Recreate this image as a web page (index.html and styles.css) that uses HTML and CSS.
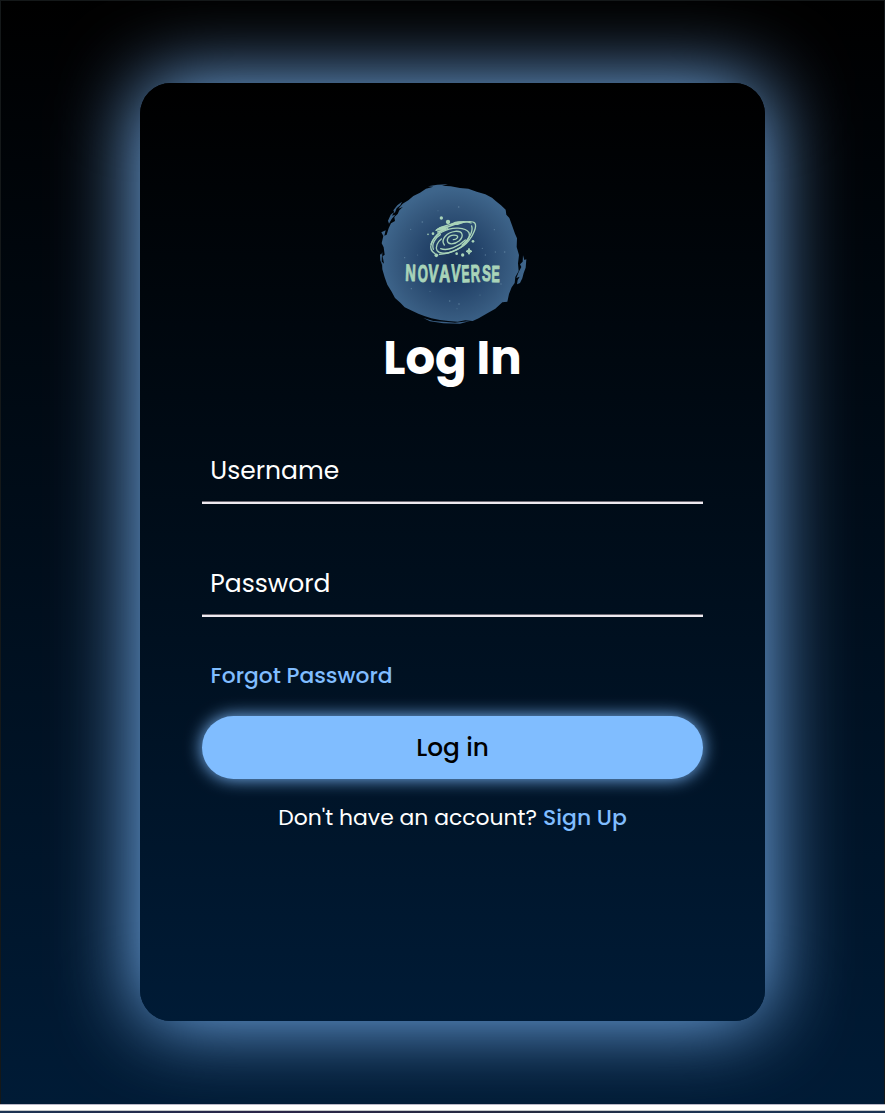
FILE: index.html
```html
<!DOCTYPE html>
<html lang="en">
<head>
<meta charset="utf-8">
<title>Novaverse - Log In</title>
<link rel="stylesheet" href="styles.css">
</head>
<body>
<main class="page">
  <form class="card">
    <svg class="logo" viewBox="0 0 510 480" role="img" aria-label="Novaverse">
      <defs>
        <radialGradient id="sky" gradientUnits="userSpaceOnUse" cx="248" cy="255" r="215">
          <stop offset="0" stop-color="#1b3558"/>
          <stop offset=".4" stop-color="#24446a"/>
          <stop offset=".75" stop-color="#34577c"/>
          <stop offset="1" stop-color="#3e658b"/>
        </radialGradient>
      </defs>
      <g fill="url(#sky)">
        <path d="M168 41L190 35 174 34 202 29 234 28 216 32 242 34 270 39 295 41 320 50 346 58 366 68 378 79 393 91 407 104 409 119 418 129 426 151 435 176 441 190 440 216 447 240 444 265 446 288 436 306 434 324 425 337 417 357 412 380 397 382 376 401 352 415 326 430 308 438 286 436 263 440 235 438 210 435 184 430 163 423 145 416 126 407 104 397 91 383 75 369 65 350 52 329 44 307 37 283 36 260 33 240 37 232 36 260 42 266 38 244 44 239 41 217 35 205 40 183 34 172 47 166 43 182 50 179 56 160 63 145 75 138 73 126 83 117 88 106 98 96 85 101 98 86 116 75 130 63 150 53Z"/>
        <path d="M54 137L62 119 72 111 66 122 76 119 65 132 57 146ZM70 106L82 91 96 80 91 91 80 100 74 115ZM30 237L34 240 36 270 31 256ZM160 429L190 438 220 440 255 443 300 438 270 446 220 445 180 439Z"/>
        <path d="M459 241L463 255 469 253 467 278 461 294 457 310 450 324 441 328 443 315 449 305 439 309 446 291 454 276 450 268 458 260Z"/>
      </g>
      <g fill="#6f92ad" opacity=".65">
        <circle cx="266" cy="96" r="2.5"/><circle cx="157" cy="141" r="2.5"/><circle cx="204" cy="107" r="1.5"/><circle cx="373" cy="164" r="2"/><circle cx="122" cy="163" r="2"/><circle cx="404" cy="231" r="2.5"/><circle cx="376" cy="231" r="2"/><circle cx="337" cy="220" r="2"/><circle cx="346" cy="240" r="2"/><circle cx="104" cy="248" r="2"/><circle cx="143" cy="240" r="1.5"/><circle cx="393" cy="327" r="2"/><circle cx="124" cy="341" r="2"/><circle cx="239" cy="378" r="2.5"/><circle cx="267" cy="387" r="2.5"/><circle cx="261" cy="401" r="1.5"/><circle cx="330" cy="360" r="1.5"/><circle cx="180" cy="349" r="1.5"/>
      </g>
      <g class="galaxy">
        <path d="M196 237C170 222 184 189 216 171C247 153 288 157 297 173C304 190 282 216 248 229C226 238 207 236 201 226C196 216 202 201 214 192"/>
        <path d="M183 208C193 178 223 157 255 148C283 140 309 137 315 145C321 155 310 180 297 196C280 218 244 237 208 238"/>
        <path d="M199 166C211 154 238 150 262 142C278 138 293 140 303 144"/>
        <path d="M305 153C310 168 299 191 276 210M190 223C184 207 196 188 211 179M203 171L233 161"/>
        <path d="M223 210C211 194 230 172 256 169C279 167 282 184 268 197C252 210 233 209 232 197C231 185 245 178 258 181C269 184 260 194 250 194"/>
        <path d="M212 221C233 229 264 216 286 195"/>
        <path d="M200 165Q212 153 230 156L218 164ZM244 148Q260 138 278 142L263 148Z" fill="#a9d4b9"/>
      </g>
      <g fill="#a9d4b9">
        <circle cx="214" cy="129" r="5"/><circle cx="234" cy="141" r="6.5"/><circle cx="189" cy="176" r="4"/><circle cx="174" cy="178" r="2.5"/><circle cx="309" cy="199" r="4"/><circle cx="199" cy="241" r="5.5"/><circle cx="260" cy="236" r="4"/><circle cx="278" cy="240" r="5"/><path d="M297 220l3 6 6 3-6 3-3 6-3-6-6-3 6-3z" stroke="#a9d4b9" stroke-width="3"/>
      </g>
      <g class="wordmark">
        <text transform="translate(105 317) rotate(2) scale(.6 .97)">N</text>
        <text transform="translate(143 321) scale(.54 .98)">O</text>
        <text transform="translate(173 320) rotate(3) scale(.62 1.03)">V</text>
        <text transform="translate(207 322) scale(.64 1)">A</text>
        <text transform="translate(242 319) rotate(2) scale(.58 1)">V</text>
        <text transform="translate(275 322) rotate(-2) scale(.5 1)">E</text>
        <text transform="translate(303 321) rotate(-2) scale(.53 1)">R</text>
        <text transform="translate(335 317) rotate(2) scale(.55 .92)">S</text>
        <text transform="translate(364 321) rotate(1) scale(.52 .96)">E</text>
      </g>
    </svg>
    <h1 class="title">Log In</h1>
    <input class="field" type="text" placeholder="Username" aria-label="Username">
    <input class="field field-password" type="password" placeholder="Password" aria-label="Password">
    <a class="forgot">Forgot Password</a>
    <button class="submit" type="button">Log in</button>
    <p class="signup"><span class="question">Don't have an account?</span><a class="signup-link">Sign Up</a></p>
  </form>
</main>
<div class="divider"></div>
<footer class="footer"></footer>
</body>
</html>
```
FILE: styles.css
```css
* { box-sizing: border-box; }

body {
  margin: 0;
  height: 1113px;
  overflow: hidden;
  display: flex;
  flex-direction: column;
  background: #fff;
  font-family: Poppins, Inter, sans-serif;
}

.page {
  flex: none;
  height: 1104px;
  padding-top: 81.5px;
  overflow: hidden;
  border: 1px solid #141819;
  border-bottom: 0;
  background: linear-gradient(#000, #001b36);
}

.card {
  width: 625px;
  height: 938px;
  margin-left: 139px;
  padding: 92.5px 62.5px 0;
  display: flex;
  flex-direction: column;
  border-radius: 31px;
  background: linear-gradient(#000, #001b36);
  box-shadow: 0 0 82px #80bdff;
}

.logo { width: 170px; height: 160px; flex: none; margin-left: 167.5px; }

.galaxy {
  fill: none;
  stroke: #a9d4b9;
  stroke-width: 4;
  stroke-linecap: round;
}

.wordmark text {
  font: bold 73px "Liberation Sans", sans-serif;
  fill: #a9d4b9;
  stroke: #a9d4b9;
  stroke-width: 3px;
  stroke-linejoin: round;
}

.title {
  margin: -13px 0 0;
  height: 72px;
  font-size: 46.6px;
  font-weight: 700;
  line-height: 72px;
  text-align: center;
  color: #fff;
}

.field {
  width: 500.5px;
  height: 68px;
  margin: 42px 0 0 -.2px;
  padding: 4px 8px 0;
  border: 0;
  border-bottom: 2px solid #eeeaf0;
  border-radius: 0;
  outline: 0;
  background: transparent;
  box-shadow: inset 0 -1px #6d6a73;
  font: 25px/62px Poppins, Inter, sans-serif;
  color: #fff;
}

.field::placeholder { color: #fff; opacity: 1; }

.field-password { margin-top: 45px; }

.forgot {
  margin: 40px 8px 0;
  height: 38px;
  line-height: 38px;
  font-size: 21.8px;
  font-weight: 500;
  color: #80bdff;
}

.submit {
  flex: none;
  width: 500.5px;
  height: 63px;
  margin: 21px 0 0 -.2px;
  border: 0;
  border-radius: 32px;
  background: #80bdff;
  box-shadow: 0 0 17px #80bdff;
  font: 500 24.8px Poppins, Inter, sans-serif;
  color: #000;
}

.signup {
  display: flex;
  justify-content: center;
  gap: 6px;
  margin: 20px 0 0;
  font-size: 21.9px;
  line-height: 38px;
  color: #fff;
}

.signup-link { font-weight: 500; color: #80bdff; }

.divider { flex: none; height: 7px; background: #fff; border-top: 1px solid #b9b7c6; border-bottom: 1px solid #c4c8c9; }
.footer { flex: none; height: 2px; background: linear-gradient(90deg, #1c3453, #2a2548 30%, #252b40 60%, #1c3453 80%); }
```
